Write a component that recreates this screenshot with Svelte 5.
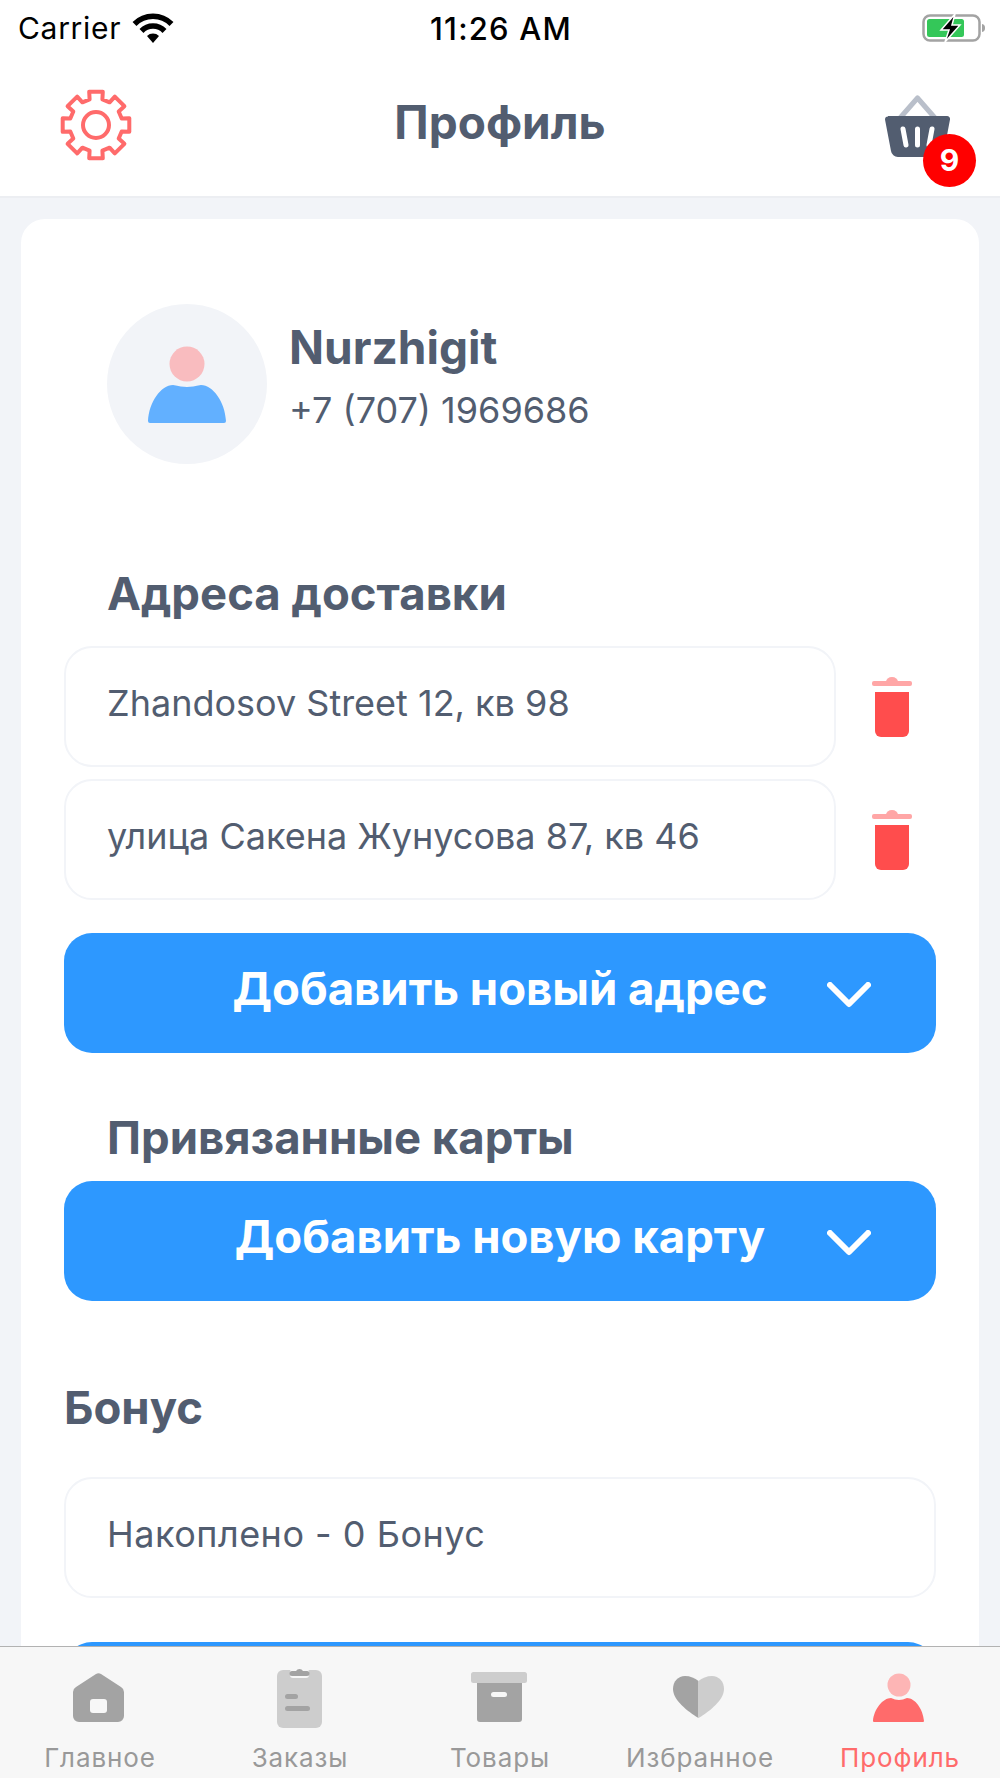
<script>
  const tabs = [
    { label: "Главное", icon: "home" },
    { label: "Заказы", icon: "orders" },
    { label: "Товары", icon: "goods" },
    { label: "Избранное", icon: "heart" },
    { label: "Профиль", icon: "profile", active: true }
  ];

  const addresses = ["Zhandosov Street 12, кв 98", "улица Сакена Жунусова 87, кв 46"];

  // 8 teeth round the centre of a 80x80 box
  function gearPath() {
    const pts = [];
    for (let i = 0; i < 8; i++) {
      const a = (i * 45 * Math.PI) / 180;
      for (const [r, d] of [[26.5, -14], [34, -11.5], [34, 11.5], [26.5, 14]]) {
        const t = a + (d * Math.PI) / 180;
        pts.push((40 + r * Math.sin(t)).toFixed(1) + " " + (40 - r * Math.cos(t)).toFixed(1));
      }
    }
    return "M" + pts.join("L") + "Z";
  }
</script>

{#snippet chevron()}
  <svg class="chevron" width="44" height="26" viewBox="0 0 44 26">
    <path d="M3 3 L22 22 L41 3" fill="none" stroke="#fff" stroke-width="6" stroke-linecap="round" stroke-linejoin="round" />
  </svg>
{/snippet}

{#snippet trash()}
  <svg width="40" height="62" viewBox="0 0 40 62">
    <path d="M14 6 a6 5 0 0 1 12 0 v1 h-12z" fill="#ffa6a6" />
    <rect x="0" y="5" width="40" height="5" rx="2" fill="#ffa6a6" />
    <path d="M3 16 H37 V55 a6 6 0 0 1 -6 6 H9 a6 6 0 0 1 -6 -6z" fill="#ff4d4d" />
  </svg>
{/snippet}

<div class="app">
  <div class="status">
    <div class="carrier">
      <span>Carrier</span>
      <svg width="42" height="30" viewBox="0 0 42 30">
        <path d="M2.500 11 a26 26 0 0 1 37 0" fill="none" stroke="#000" stroke-width="5.500" />
        <path d="M9.500 18 a16 16 0 0 1 23 0" fill="none" stroke="#000" stroke-width="5.500" />
        <path d="M15 23 a8.500 8.500 0 0 1 12 0 L21 30z" fill="#000" />
      </svg>
    </div>
    <span class="time">11:26 AM</span>
    <svg class="battery" width="64" height="30" viewBox="0 0 64 30">
      <rect x="1.500" y="2.500" width="56" height="25" rx="6.500" fill="none" stroke="#a3a3a3" stroke-width="2.500" />
      <rect x="5" y="6" width="37" height="18" rx="2.500" fill="#34c759" />
      <path d="M60 11 c2.500 .5 3 2 3 4 s-.5 3.500 -3 4z" fill="#a3a3a3" />
      <path d="M33 1 L19 17 H27 L23 29 L38 12 H30z" fill="#000" stroke="#fff" stroke-width="1.500" />
    </svg>
  </div>

  <header>
    <svg class="gear" width="80" height="80" viewBox="0 0 80 80">
      <path d={gearPath()} fill="none" stroke="#ff6b6b" stroke-width="4" stroke-linejoin="round" />
      <circle cx="40" cy="40" r="13" fill="none" stroke="#ff6b6b" stroke-width="4" />
    </svg>
    <h1>Профиль</h1>
    <div class="basket">
      <svg width="65" height="64" viewBox="0 0 65 64">
        <path d="M15 25 L32.500 5 L50 25" fill="none" stroke="#b9bfca" stroke-width="5" stroke-linejoin="round" />
        <path d="M3 23 H62 a3 3 0 0 1 3 3.500 L59 58 a7 7 0 0 1 -7 6 H13 a7 7 0 0 1 -7 -6 L0 26.500 a3 3 0 0 1 3 -3z" fill="#525d70" />
        <path d="M18 36 L21 52 M32.500 36 V52 M47 36 L44 52" fill="none" stroke="#fff" stroke-width="5" stroke-linecap="round" />
      </svg>
      <span class="badge">9</span>
    </div>
  </header>

  <main>
    <div class="card">
      <div class="profile">
        <div class="avatar">
          <svg width="160" height="160" viewBox="0 0 160 160">
            <circle cx="80" cy="60" r="17.500" fill="#f9bcbf" />
            <path d="M41 117 C42 98 54 81 66 81 C72 82 76 83 80 83 C84 83 88 82 94 81 C106 81 118 98 119 117 a2 2 0 0 1 -2 2 H43 a2 2 0 0 1 -2 -2z" fill="#62b0ff" />
          </svg>
        </div>
        <div class="who">
          <span class="name">Nurzhigit</span>
          <span class="phone">+7 (707) 1969686</span>
        </div>
      </div>

      <h2 class="inset first">Адреса доставки</h2>
      <div class="rows">
        {#each addresses as address}
          <div class="row">
            <div class="box">{address}</div>
            {@render trash()}
          </div>
        {/each}
      </div>
      <button class="add add-address">
        <span class="add-label">Добавить новый адрес</span>
        {@render chevron()}
      </button>

      <h2 class="inset cards">Привязанные карты</h2>
      <button class="add">
        <span class="add-label">Добавить новую карту</span>
        {@render chevron()}
      </button>

      <h2 class="bonus">Бонус</h2>
      <div class="box bonus-box">Накоплено - 0 Бонус</div>
      <button class="add last" aria-label="Бонус"></button>
    </div>
  </main>

  <nav>
    {#each tabs as tab}
      <div class="tab" class:active={tab.active}>
        <svg width="70" height="72" viewBox="0 0 70 72">
          {#if tab.icon === "home"}
            <path d="M31 14 a5 5 0 0 1 5 0 L56 27 a6 6 0 0 1 3 5 V56 a6 6 0 0 1 -6 6 H14 a6 6 0 0 1 -6 -6 V32 a6 6 0 0 1 3 -5z" fill="#a3a3a3" />
            <rect x="25" y="39" width="17" height="14" rx="3" fill="#f7f7f7" />
          {:else if tab.icon === "orders"}
            <path d="M18 10 H51 a6 6 0 0 1 6 6 V62 a6 6 0 0 1 -6 6 H18 a6 6 0 0 1 -6 -6 V16 a6 6 0 0 1 6 -6z" fill="#cdcdcd" />
            <rect x="25" y="9" width="19" height="9" rx="3" fill="#f7f7f7" />
            <path d="M27 11 H31 a4 4 0 0 1 7 0 H42 a2 2 0 0 1 0 5 H27 a2 2 0 0 1 0 -5z" fill="#a3a3a3" />
            <rect x="20" y="34" width="13" height="5" rx="2.500" fill="#a3a3a3" />
            <rect x="20" y="46" width="25" height="5" rx="2.500" fill="#a3a3a3" />
          {:else if tab.icon === "goods"}
            <rect x="6" y="12" width="56" height="11" rx="2.500" fill="#cdcdcd" />
            <path d="M12 23 H57 V59 a3 3 0 0 1 -3 3 H15 a3 3 0 0 1 -3 -3z" fill="#a3a3a3" />
            <rect x="26" y="32" width="16" height="5" rx="2.500" fill="#f7f7f7" />
          {:else if tab.icon === "heart"}
            <path d="M33.500 21 C30 18 25 16 20 16 C13 16 8 21.500 8 29 C8 40 22 51 33.500 58z" fill="#a3a3a3" />
            <path d="M33.500 21 C37 18 42 16 47 16 C54 16 59 21.500 59 29 C59 40 45 51 33.500 58z" fill="#cdcdcd" />
          {:else}
            <circle cx="34" cy="25" r="11.500" fill="#fdb5b5" />
            <path d="M8 61 C9 49 18 38 26 38 C29 39 31 40 34 40 C37 40 39 39 42 38 C50 38 58 49 59 61 a1 1 0 0 1 -1 1 H9 a1 1 0 0 1 -1 -1z" fill="#ff6b6b" />
          {/if}
        </svg>
        <span>{tab.label}</span>
      </div>
    {/each}
  </nav>
</div>

<style>
  :global(body) {
    margin: 0;
    background: #f2f4f8;
  }

  .app {
    display: flex;
    flex-direction: column;
    width: 1000px;
    height: 1778px;
    overflow: hidden;
    font-family: Inter, "Noto Sans", sans-serif;
    color: #525d70;
  }

  .status {
    display: grid;
    grid-template-columns: 1fr auto 1fr;
    align-items: center;
    height: 54px;
    padding: 2px 14px 0 18px;
    box-sizing: border-box;
    background: #fff;
    font-family: Inter, "Liberation Sans", sans-serif;
    font-size: 30px;
    color: #000;
  }

  .carrier {
    display: flex;
    align-items: center;
    gap: 11px;
    letter-spacing: 0.7px;
  }

  .time {
    margin-right: 2px;
    font-size: 31px;
    font-weight: 500;
    letter-spacing: 1.2px;
  }

  .battery {
    justify-self: end;
  }

  header {
    display: grid;
    grid-template-columns: 1fr auto 1fr;
    align-items: center;
    height: 142px;
    padding: 0 24px;
    background: #fff;
    border-bottom: 2px solid #eceef2;
  }

  .gear {
    margin-left: 32px;
  }

  h1 {
    margin: 0 0 6px;
    font-size: 46px;
    font-weight: 700;
  }

  .basket {
    position: relative;
    justify-self: end;
    width: 91px;
    height: 64px;
  }

  .badge {
    position: absolute;
    left: 38px;
    top: 41px;
    width: 53px;
    height: 53px;
    border-radius: 50%;
    background: #f00;
    color: #fff;
    font-size: 30px;
    font-weight: 700;
    line-height: 53px;
    text-align: center;
  }

  main {
    display: flex;
    flex: 1;
    min-height: 0;
    padding: 21px 21px 0;
  }

  .card {
    flex: 1;
    padding: 85px 43px 0;
    overflow: hidden;
    background: #fff;
    border-radius: 24px 24px 0 0;
  }

  .profile {
    display: flex;
    align-items: center;
    gap: 22px;
    padding-left: 43px;
  }

  .avatar {
    width: 160px;
    height: 160px;
    border-radius: 50%;
    background: #f2f4f8;
  }

  .who {
    display: flex;
    flex-direction: column;
    gap: 12px;
    margin-bottom: 16px;
  }

  .name {
    font-size: 46px;
    font-weight: 700;
    line-height: 56px;
  }

  .phone {
    font-size: 36px;
    line-height: 46px;
  }

  h2 {
    margin: 0;
    font-size: 45.500px;
    font-weight: 700;
    line-height: 56px;
  }

  .inset {
    padding-left: 43px;
  }

  .first {
    margin: 102px 0 24px;
  }

  .cards {
    margin: 57px 0 15px;
  }

  .bonus {
    margin: 79px 0 41px;
  }

  .rows {
    display: flex;
    flex-direction: column;
    gap: 12px;
  }

  .row {
    display: flex;
    align-items: center;
    gap: 36px;
  }

  .box {
    display: flex;
    align-items: center;
    box-sizing: border-box;
    width: 772px;
    height: 121px;
    padding: 0 0 7px 41px;
    border: 2px solid #f2f4f8;
    border-radius: 28px;
    font-size: 36px;
  }

  .bonus-box {
    width: 100%;
    letter-spacing: 0.5px;
  }

  .add {
    display: grid;
    grid-template-columns: 1fr auto 1fr;
    align-items: center;
    width: 100%;
    height: 120px;
    padding: 0 65px;
    border: 0;
    border-radius: 28px;
    background: #2d98ff;
    color: #fff;
    font-family: inherit;
    font-size: 45.500px;
    font-weight: 700;
  }

  .add-label {
    grid-column: 2;
    margin-bottom: 9px;
  }

  .chevron {
    grid-column: 3;
    justify-self: end;
    margin-top: 4px;
  }

  .add-address {
    margin-top: 33px;
  }

  .last {
    margin-top: 44px;
  }

  nav {
    display: grid;
    grid-template-columns: repeat(5, 1fr);
    flex: none;
    height: 132px;
    box-sizing: border-box;
    border-top: 1px solid #b2b2b2;
    background: #f7f7f7;
  }

  .tab {
    display: flex;
    flex-direction: column;
    align-items: center;
    padding-top: 13px;
    color: #999;
    font-family: Inter, "Liberation Sans", sans-serif;
    font-size: 26px;
    letter-spacing: 0.9px;
    line-height: 28px;
  }

  .tab svg {
    margin-bottom: 12px;
  }

  .tab.active {
    color: #ff6b6b;
  }
</style>
